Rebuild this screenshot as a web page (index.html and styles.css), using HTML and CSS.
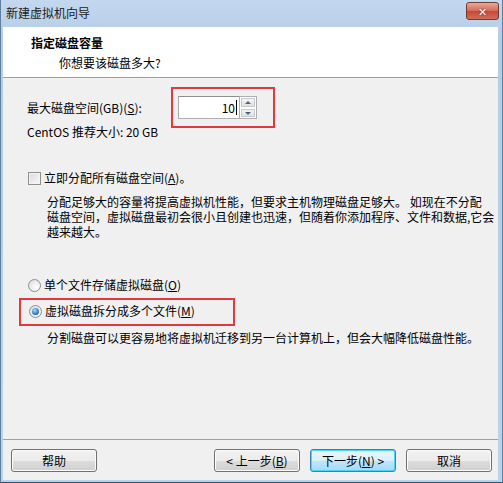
FILE: index.html
```html
<!DOCTYPE html>
<html lang="zh-CN">
	<head>
		<meta charset="UTF-8" />
		<title>新建虚拟机向导</title>
		<link rel="stylesheet" href="styles.css">
	</head>
	<body>
		<div class="window">
			<div class="titlebar">
				<span class="title">新建虚拟机向导</span>
				<span class="close">✕</span>
			</div>

			<div class="client">
				<div class="header">
					<div class="header-title">指定磁盘容量</div>
					<div class="header-sub">你想要该磁盘多大?</div>
				</div>

				<div class="main">
					<div class="size-row">
						<label class="size-label">最大磁盘空间(GB)(<u>S</u>):</label>
						<div class="mark size-mark">
							<div class="spin">
								<div class="spin-input">10<span class="caret"></span></div>
								<div class="spin-btns">
									<span class="spin-btn up"></span>
									<span class="spin-btn down"></span>
								</div>
							</div>
						</div>
					</div>
					<div class="hint">CentOS 推荐大小: 20 GB</div>

					<div class="option check-row">
						<span class="checkbox"></span>
						<span>立即分配所有磁盘空间(<u>A</u>)。</span>
					</div>
					<p class="desc">
						分配足够大的容量将提高虚拟机性能，但要求主机物理磁盘足够大。 如现在不分配<br>
						磁盘空间，虚拟磁盘最初会很小且创建也迅速，但随着你添加程序、文件和数据,它会<br>
						越来越大。
					</p>

					<div class="option radio-single">
						<span class="radio"></span>
						<span>单个文件存储虚拟磁盘(<u>O</u>)</span>
					</div>
					<div class="mark radio-mark">
						<div class="option">
							<span class="radio checked"></span>
							<span>虚拟磁盘拆分成多个文件(<u>M</u>)</span>
						</div>
					</div>
					<p class="desc desc-split">分割磁盘可以更容易地将虚拟机迁移到另一台计算机上，但会大幅降低磁盘性能。</p>
				</div>

				<div class="footer">
					<button class="btn">帮助</button>
					<span class="spacer"></span>
					<button class="btn">&lt; 上一步(<u>B</u>)</button>
					<button class="btn default">下一步(<u>N</u>) &gt;</button>
					<button class="btn">取消</button>
				</div>
			</div>
		</div>
	</body>
</html>
```

FILE: styles.css
```css
body {
	margin: 0;
	font-family: "Noto Sans CJK SC", "DejaVu Sans", sans-serif;
	font-size: 12px;
	color: #000;
	background: #fff;
}

.window {
	width: 503px;
	height: 483px;
	box-sizing: border-box;
	background: linear-gradient(#c3d8ef, #b5cce7 40px, #bcd2ea);
	border-left: 1px solid #5f7f9f;
	border-right: 1px solid #5f7f9f;
	border-bottom: 1px solid #2d4f6a;
	display: flex;
	flex-direction: column;
}

.titlebar {
	height: 27px;
	display: flex;
	align-items: center;
	justify-content: space-between;
	padding: 0 3px 0 5px;
}

.title {
	color: #1a1a1a;
	line-height: 16px;
	margin-top: -1px;
}

.close {
	width: 31px;
	height: 16px;
	margin-top: -5px;
	border: 1px solid #6e3b33;
	border-radius: 3px;
	background: linear-gradient(#e9a899, #d46a56 50%, #c24a36 51%, #d26d58);
	color: #fff;
	font-size: 11px;
	font-weight: bold;
	line-height: 16px;
	text-align: center;
	text-shadow: 0 0 2px #6e2a20;
}

.client {
	flex: 1;
	margin: 0 4px 2px 2px;
	display: flex;
	flex-direction: column;
	background: #f0f0f0;
}

/* 顶部白色标题区 */
.header {
	height: 50px;
	background: #fff;
	border-bottom: 1px solid #a0a0a0;
	padding: 8px 0 0 28px;
	box-sizing: content-box;
	height: 42px;
}

.header-title {
	font-weight: bold;
	line-height: 16px;
}

.header-sub {
	line-height: 16px;
	margin: 4px 0 0 28px;
}

.main {
	height: 361px;
	padding-left: 24px;
	box-sizing: border-box;
	padding-top: 9px;
}

.size-row {
	display: flex;
	align-items: center;
	height: 41px;
}

.size-label {
	width: 144px;
	line-height: 16px;
}

.mark {
	border: 2px solid #e0393e;
	box-sizing: border-box;
}

.size-mark {
	width: 104px;
	height: 41px;
	padding: 7px 0 0 5px;
}

.spin {
	display: flex;
	width: 79px;
	height: 23px;
}

.spin-input {
	flex: 1;
	background: #fff;
	border: 1px solid #abadb3;
	border-right: none;
	border-top-color: #8e8f8f;
	text-align: right;
	line-height: 21px;
	padding-right: 2px;
	display: flex;
	align-items: center;
	justify-content: flex-end;
}

.caret {
	width: 1px;
	height: 15px;
	background: #000;
	margin-left: 1px;
}

.spin-btns {
	width: 16px;
	display: flex;
	flex-direction: column;
	border: 1px solid #abadb3;
	background: #fff;
}

.spin-btn {
	flex: 1;
	margin: 1px;
	border: 1px solid #c6c9d0;
	background: linear-gradient(#f4f4f4, #e0e0e0);
	position: relative;
}

.spin-btn::after {
	content: "";
	position: absolute;
	left: 3px;
	top: 2px;
	border-left: 3px solid transparent;
	border-right: 3px solid transparent;
}

.spin-btn.up::after {
	border-bottom: 3px solid #4d6185;
}

.spin-btn.down::after {
	border-top: 3px solid #4d6185;
}

.hint {
	line-height: 16px;
	margin-top: -4px;
}

.option {
	display: flex;
	align-items: center;
	gap: 3px;
	line-height: 16px;
	padding-left: 1px;
}

.check-row {
	margin-top: 30px;
}

.checkbox {
	width: 11px;
	height: 11px;
	border: 1px solid #8f8f8f;
	background: linear-gradient(135deg, #dcdcdc, #f7f7f7);
	box-shadow: inset 0 0 0 1px #f4f4f4;
}

.radio {
	width: 11px;
	height: 11px;
	border: 1px solid #8f8f8f;
	border-radius: 50%;
	background: radial-gradient(circle at 65% 65%, #fff, #d8d8d8);
	position: relative;
}

.radio.checked::after {
	content: "";
	position: absolute;
	left: 2px;
	top: 2px;
	width: 7px;
	height: 7px;
	border-radius: 50%;
	background: radial-gradient(circle at 40% 35%, #a8dcff, #1a68b8 70%, #0c4f97);
}

.desc {
	margin: 8px 0 0 20px;
	line-height: 15px;
	white-space: nowrap;
}

.radio-single {
	margin-top: 38px;
}

.radio-mark {
	width: 216px;
	height: 28px;
	margin: 5px 0 0 -8px;
	padding: 3px 0 0 7px;
}

.desc-split {
	margin-top: 4px;
	line-height: 16px;
}

.footer {
	flex: 1;
	border-top: 1px solid #a0a0a0;
	display: flex;
	align-items: flex-start;
	gap: 10px;
	padding: 9px 6px 0 8px;
}

.spacer {
	flex: 1;
}

.btn {
	width: 86px;
	height: 23px;
	padding: 0;
	border: 1px solid #707070;
	border-radius: 3px;
	background: linear-gradient(#f2f2f2, #ebebeb 50%, #dddddd 51%, #cfcfcf);
	box-shadow: inset 0 0 0 1px #fcfcfc;
	font-family: inherit;
	font-size: 12px;
	color: #000;
	line-height: 20px;
}

.btn.default {
	border-color: #3c7fb1;
	background: linear-gradient(#eaf6fd, #d9f0fc 50%, #bee6fd 51%, #a7d9f5);
	box-shadow: inset 0 0 0 1px #48d6f4;
}
```
